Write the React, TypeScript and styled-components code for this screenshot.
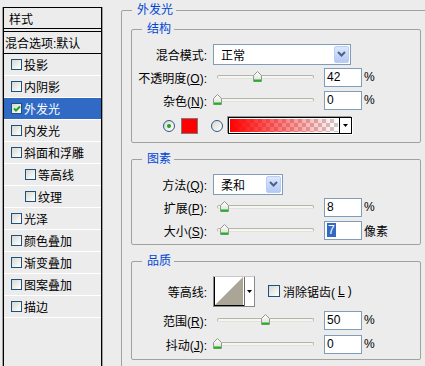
import React, { FC, ReactNode } from 'react';
import styled, { createGlobalStyle } from 'styled-components';

const GlobalStyle = createGlobalStyle`
  html, body {
    margin: 0;
    padding: 0;
  }
  body {
    width: 425px;
    height: 366px;
    overflow: hidden;
    background: #ececec;
    color: #000;
    font-family: "Liberation Sans", "Noto Sans CJK SC", sans-serif;
    font-size: 12px;
  }
`;

const Dialog = styled.div`
  display: flex;
  align-items: flex-start;
  height: 366px;
  overflow: hidden;
`;

/* ---------- left: style list ---------- */

const StylePanel = styled.div`
  margin: 7px 0 0 3px;
  width: 99px;
  height: 359px;
  box-sizing: border-box;
  flex: none;
  border: 1px solid #000;
  border-bottom: none;
  box-shadow: -1px 0 0 #a0a0a0, 1px 0 0 #a0a0a0;
  display: flex;
  flex-direction: column;
`;

const TitleHeader = styled.div`
  height: 20px;
  display: flex;
  align-items: center;
  padding-left: 5px;
  border-bottom: 1px solid #000;
`;

const BlendHeader = styled.div`
  margin-top: 2px;
  height: 21px;
  display: flex;
  align-items: center;
  padding-left: 1px;
  border-top: 1px solid #000;
  border-bottom: 1px solid #000;
  white-space: nowrap;
`;

const LayerRow = styled.div<{ $indent?: boolean; $selected?: boolean }>`
  height: 21px;
  display: flex;
  align-items: center;
  gap: 2px;
  padding-left: ${(p) => (p.$indent ? 21 : 7)}px;
  border-bottom: 1px solid #fff;
  background: ${(p) => (p.$selected ? '#316ac5' : 'transparent')};
  color: ${(p) => (p.$selected ? '#fff' : '#000')};
  white-space: nowrap;
`;

const CheckBox = styled.span<{ $size?: number }>`
  width: ${(p) => p.$size ?? 11}px;
  height: ${(p) => p.$size ?? 11}px;
  box-sizing: border-box;
  flex: none;
  border: 1px solid #1c5180;
  background: linear-gradient(135deg, #d8d8d2 0%, #f4f4f0 70%, #fff 100%);
  display: flex;
  align-items: center;
  justify-content: center;
`;

const Tick = () => (
  <svg width="8" height="7" viewBox="0 0 8 7">
    <path d="M1 3.5 L3 5.5 L7 1.5" fill="none" stroke="#21a121" strokeWidth="2" />
  </svg>
);

/* ---------- right: groups ---------- */

const OuterGroup = styled.fieldset`
  margin: 3px 0 0 19px;
  width: 320px;
  box-sizing: border-box;
  flex: none;
  padding: 5px 0 12px 0;
  border: 1px solid #a2a29c;
  border-radius: 2px;
  display: flex;
  flex-direction: column;
  gap: 9px;
`;

const Legend = styled.legend`
  margin-left: 10px;
  padding: 0 3px 0 5px;
  line-height: 14px;
  font-size: 12px;
  color: #0046d5;
`;

const Group = styled.fieldset<{ $pb: number }>`
  margin: 0 0 0 9px;
  width: 290px;
  box-sizing: border-box;
  padding: 7px 0 ${(p) => p.$pb}px 0;
  border: 1px solid #a2a29c;
  border-radius: 2px;
  display: flex;
  flex-direction: column;
  gap: ${(p) => (p.$pb === 4 ? 2 : 1)}px;
`;

const Row = styled.div<{ $h?: number; $pl?: number }>`
  height: ${(p) => p.$h ?? 22}px;
  display: flex;
  align-items: center;
  padding-left: ${(p) => p.$pl ?? 0}px;
  white-space: nowrap;
`;

const Label = styled.label`
  width: 75px;
  flex: none;
  margin-right: 6px;
  text-align: right;
  white-space: nowrap;
`;

const SelectBox = styled.div<{ $w: number }>`
  width: ${(p) => p.$w}px;
  height: 21px;
  box-sizing: border-box;
  border: 1px solid #7f9db9;
  background: #fff;
  display: flex;
  align-items: center;
`;

const SelectText = styled.span`
  flex: 1;
  padding-left: 7px;
`;

const DropButton = styled.span`
  width: 15px;
  height: 17px;
  box-sizing: border-box;
  margin-right: 1px;
  border: 1px solid #b9cdf5;
  border-radius: 2px;
  background: linear-gradient(#dde7fd, #b4c9f6);
  display: flex;
  align-items: center;
  justify-content: center;
`;

const Chevron = () => (
  <svg width="9" height="6" viewBox="0 0 9 6">
    <path d="M1 1 L4.5 4.5 L8 1" fill="none" stroke="#4d6185" strokeWidth="2" />
  </svg>
);

const SliderBox = styled.div`
  position: relative;
  width: 105px;
  height: 22px;
  box-sizing: border-box;
  padding: 0 4px;
  flex: none;
  display: flex;
  align-items: center;
`;

const Track = styled.div`
  flex: 1;
  height: 4px;
  box-sizing: border-box;
  border: 1px solid #b4b4ac;
  border-bottom-color: #e2e2dc;
  border-radius: 2px;
  background: #f6f6f0;
`;

const Thumb = styled.span`
  position: absolute;
  top: 5px;
  width: 9px;
  height: 11px;
  display: flex;
`;

const NumBox = styled.div`
  width: 38px;
  height: 19px;
  box-sizing: border-box;
  margin-left: 6px;
  padding-left: 2px;
  border: 1px solid #7f9db9;
  background: #fff;
  display: flex;
  align-items: center;
  flex: none;
`;

const Unit = styled.span`
  margin-left: 2px;
`;

const Selected = styled.span`
  background: #316ac5;
  color: #fff;
  padding: 0 1px;
`;

const Radio = styled.span<{ $on?: boolean }>`
  width: 12px;
  height: 12px;
  box-sizing: border-box;
  flex: none;
  border-radius: 50%;
  border: 1px solid #2f5a85;
  background: linear-gradient(135deg, #d8d8d2, #fff);
  display: flex;
  align-items: center;
  justify-content: center;
  &::after {
    content: '';
    display: ${(p) => (p.$on ? 'block' : 'none')};
    width: 4px;
    height: 4px;
    border-radius: 50%;
    background: #21a121;
  }
`;

const Swatch = styled.span`
  width: 17px;
  height: 16px;
  box-sizing: border-box;
  margin-left: 6px;
  flex: none;
  border: 1px solid #7a7a7a;
  background: #ff0000;
`;

const GradientPicker = styled.div`
  width: 124px;
  height: 17px;
  box-sizing: border-box;
  margin-left: 5px;
  border: 1px solid #000;
  box-shadow: -1px -1px 0 #9a9a9a, 1px 1px 0 #fff;
  display: flex;
`;

const GradientFill = styled.span`
  flex: 1;
  border: 1px solid #fff;
  background: linear-gradient(to right, #ff0000 0%, rgba(255, 0, 0, 0) 100%),
    repeating-conic-gradient(#cccccc 0% 25%, #ffffff 0% 50%) 0 0 / 8px 8px;
`;

const ArrowPart = styled.span`
  width: 11px;
  flex: none;
  border-left: 1px solid #000;
  background: #fff;
  display: flex;
  align-items: center;
  justify-content: center;
`;

const SmallArrow = () => (
  <svg width="5" height="3" viewBox="0 0 5 3">
    <path d="M0 0 H5 L2.5 3 Z" fill="#000" />
  </svg>
);

const ContourPicker = styled.div`
  width: 42px;
  height: 31px;
  box-sizing: border-box;
  border: 1px solid #8a8a8a;
  border-top-color: #c8c8c8;
  background: #fff;
  display: flex;
`;

const ContourImage = styled.span`
  width: 29px;
  border-left: 1px solid #000;
  border-bottom: 1px solid #000;
  display: flex;
`;

const ContourArrow = styled.span`
  flex: 1;
  border-left: 1px solid #6a6a6a;
  display: flex;
  align-items: center;
  justify-content: center;
`;

const CheckLabel = styled.span`
  margin-left: 13px;
  display: flex;
  align-items: center;
  gap: 3px;
`;

const ThumbIcon = () => (
  <svg width="9" height="11" viewBox="0 0 9 11">
    <defs>
      <linearGradient id="thumbFill" x1="0" x2="0" y1="0" y2="1">
        <stop offset="0" stopColor="#ffffff" />
        <stop offset="1" stopColor="#dedfd6" />
      </linearGradient>
    </defs>
    <path d="M0.5 4.5 L4.5 0.5 L8.5 4.5 V10.5 H0.5 Z" fill="url(#thumbFill)" stroke="#8c9a8c" />
    <rect x="1" y="8.5" width="7" height="2" fill="#1fb41f" />
  </svg>
);

const Slider: FC<{ pos: number }> = ({ pos }) => (
  <SliderBox>
    <Track />
    <Thumb style={{ left: 4 + pos * 97 - 4.5 }}>
      <ThumbIcon />
    </Thumb>
  </SliderBox>
);

const SliderRow: FC<{ label: ReactNode; pos: number; value: ReactNode; unit: string }> = ({
  label,
  pos,
  value,
  unit
}) => (
  <Row>
    <Label>{label}</Label>
    <Slider pos={pos} />
    <NumBox>{value}</NumBox>
    <Unit>{unit}</Unit>
  </Row>
);

const layers = [
  { name: '投影' },
  { name: '内阴影' },
  { name: '外发光', on: true },
  { name: '内发光' },
  { name: '斜面和浮雕' },
  { name: '等高线', indent: true },
  { name: '纹理', indent: true },
  { name: '光泽' },
  { name: '颜色叠加' },
  { name: '渐变叠加' },
  { name: '图案叠加' },
  { name: '描边' }
];

const App: FC = () => {
  return (
    <Dialog>
      <GlobalStyle />
      <StylePanel>
        <TitleHeader>样式</TitleHeader>
        <BlendHeader>混合选项:默认</BlendHeader>
        {layers.map((l) => (
          <LayerRow key={l.name} $indent={l.indent} $selected={l.on}>
            <CheckBox>{l.on && <Tick />}</CheckBox>
            {l.name}
          </LayerRow>
        ))}
      </StylePanel>

      <OuterGroup>
        <Legend>外发光</Legend>

        <Group $pb={3}>
          <Legend>结构</Legend>
          <Row>
            <Label>混合模式:</Label>
            <SelectBox $w={138}>
              <SelectText>正常</SelectText>
              <DropButton>
                <Chevron />
              </DropButton>
            </SelectBox>
          </Row>
          <SliderRow
            label={<>不透明度(<u>O</u>):</>}
            pos={0.42}
            value="42"
            unit="%"
          />
          <SliderRow label={<>杂色(<u>N</u>):</>} pos={0} value="0" unit="%" />
          <Row $h={27} $pl={31}>
            <Radio $on />
            <Swatch />
            <Radio style={{ marginLeft: 13 }} />
            <GradientPicker>
              <GradientFill />
              <ArrowPart>
                <SmallArrow />
              </ArrowPart>
            </GradientPicker>
          </Row>
        </Group>

        <Group $pb={3}>
          <Legend>图素</Legend>
          <Row>
            <Label>方法(<u>Q</u>):</Label>
            <SelectBox $w={70}>
              <SelectText>柔和</SelectText>
              <DropButton>
                <Chevron />
              </DropButton>
            </SelectBox>
          </Row>
          <SliderRow label={<>扩展(<u>P</u>):</>} pos={0.08} value="8" unit="%" />
          <SliderRow
            label={<>大小(<u>S</u>):</>}
            pos={0.08}
            value={<Selected>7</Selected>}
            unit="像素"
          />
        </Group>

        <Group $pb={4}>
          <Legend>品质</Legend>
          <Row $h={32}>
            <Label>等高线:</Label>
            <ContourPicker>
              <ContourImage>
                <svg width="28" height="28" viewBox="0 0 28 28">
                  <path d="M0 28 L28 0 V28 Z" fill="#a9a597" />
                </svg>
              </ContourImage>
              <ContourArrow>
                <SmallArrow />
              </ContourArrow>
            </ContourPicker>
            <CheckLabel>
              <CheckBox $size={12} />
              消除锯齿(<u>L</u>)
            </CheckLabel>
          </Row>
          <SliderRow label={<>范围(<u>R</u>):</>} pos={0.5} value="50" unit="%" />
          <SliderRow label={<>抖动(<u>J</u>):</>} pos={0} value="0" unit="%" />
        </Group>
      </OuterGroup>
    </Dialog>
  );
};

export default App;
